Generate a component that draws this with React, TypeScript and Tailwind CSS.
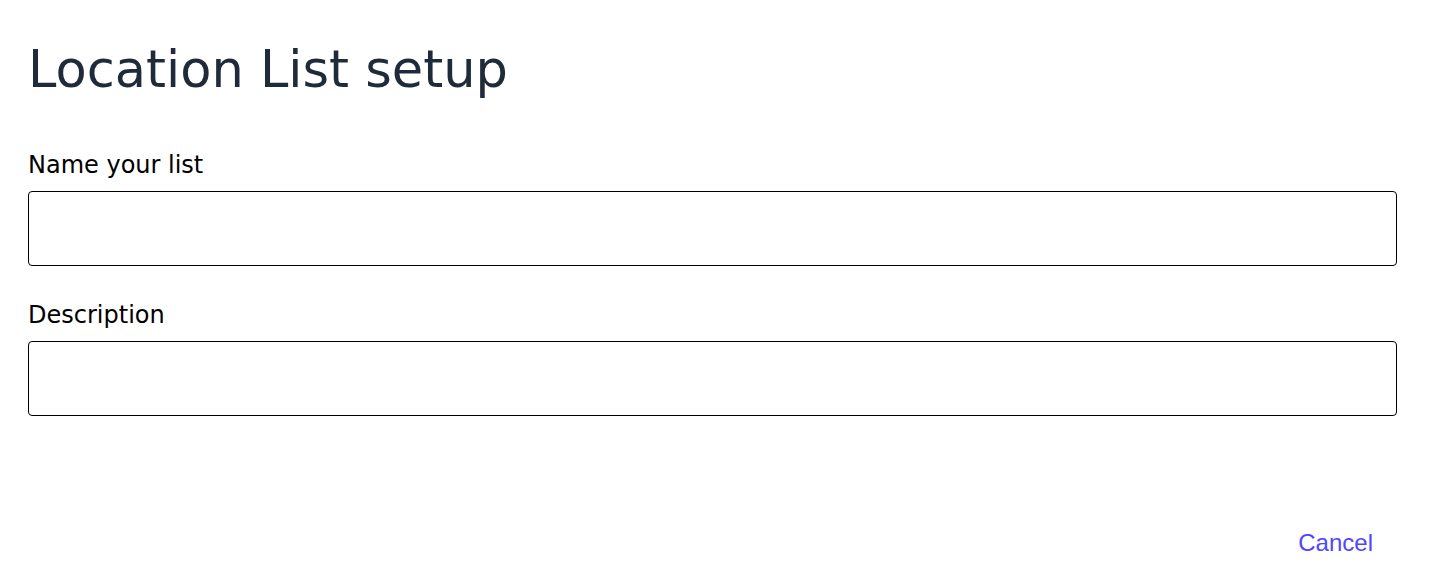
export default function App() {
  return (
    <div className="min-h-[585px] bg-white px-7 pt-[38px] font-['DejaVu_Sans',sans-serif]">
      <h1 className="text-[51px] leading-[64px] font-normal text-[#1f2a3a]">
        Location List setup
      </h1>

      <form className="mr-[27px] mt-[47px] flex flex-col">
        <label className="flex flex-col">
          <span className="text-[24px] leading-[32px] text-black">Name your list</span>
          <input className="mt-[10px] h-[75px] rounded-[4px] border border-black px-3" />
        </label>

        <label className="mt-[33px] flex flex-col">
          <span className="text-[24px] leading-[32px] text-black">Description</span>
          <input className="mt-[10px] h-[75px] rounded-[4px] border border-black px-3" />
        </label>

        <div className="mt-[112px] flex justify-end pr-6">
          <button
            type="button"
            className="font-['Liberation_Sans',sans-serif] text-[24px] leading-[30px] text-[#5046ff]"
          >
            Cancel
          </button>
        </div>
      </form>
    </div>
  );
}
